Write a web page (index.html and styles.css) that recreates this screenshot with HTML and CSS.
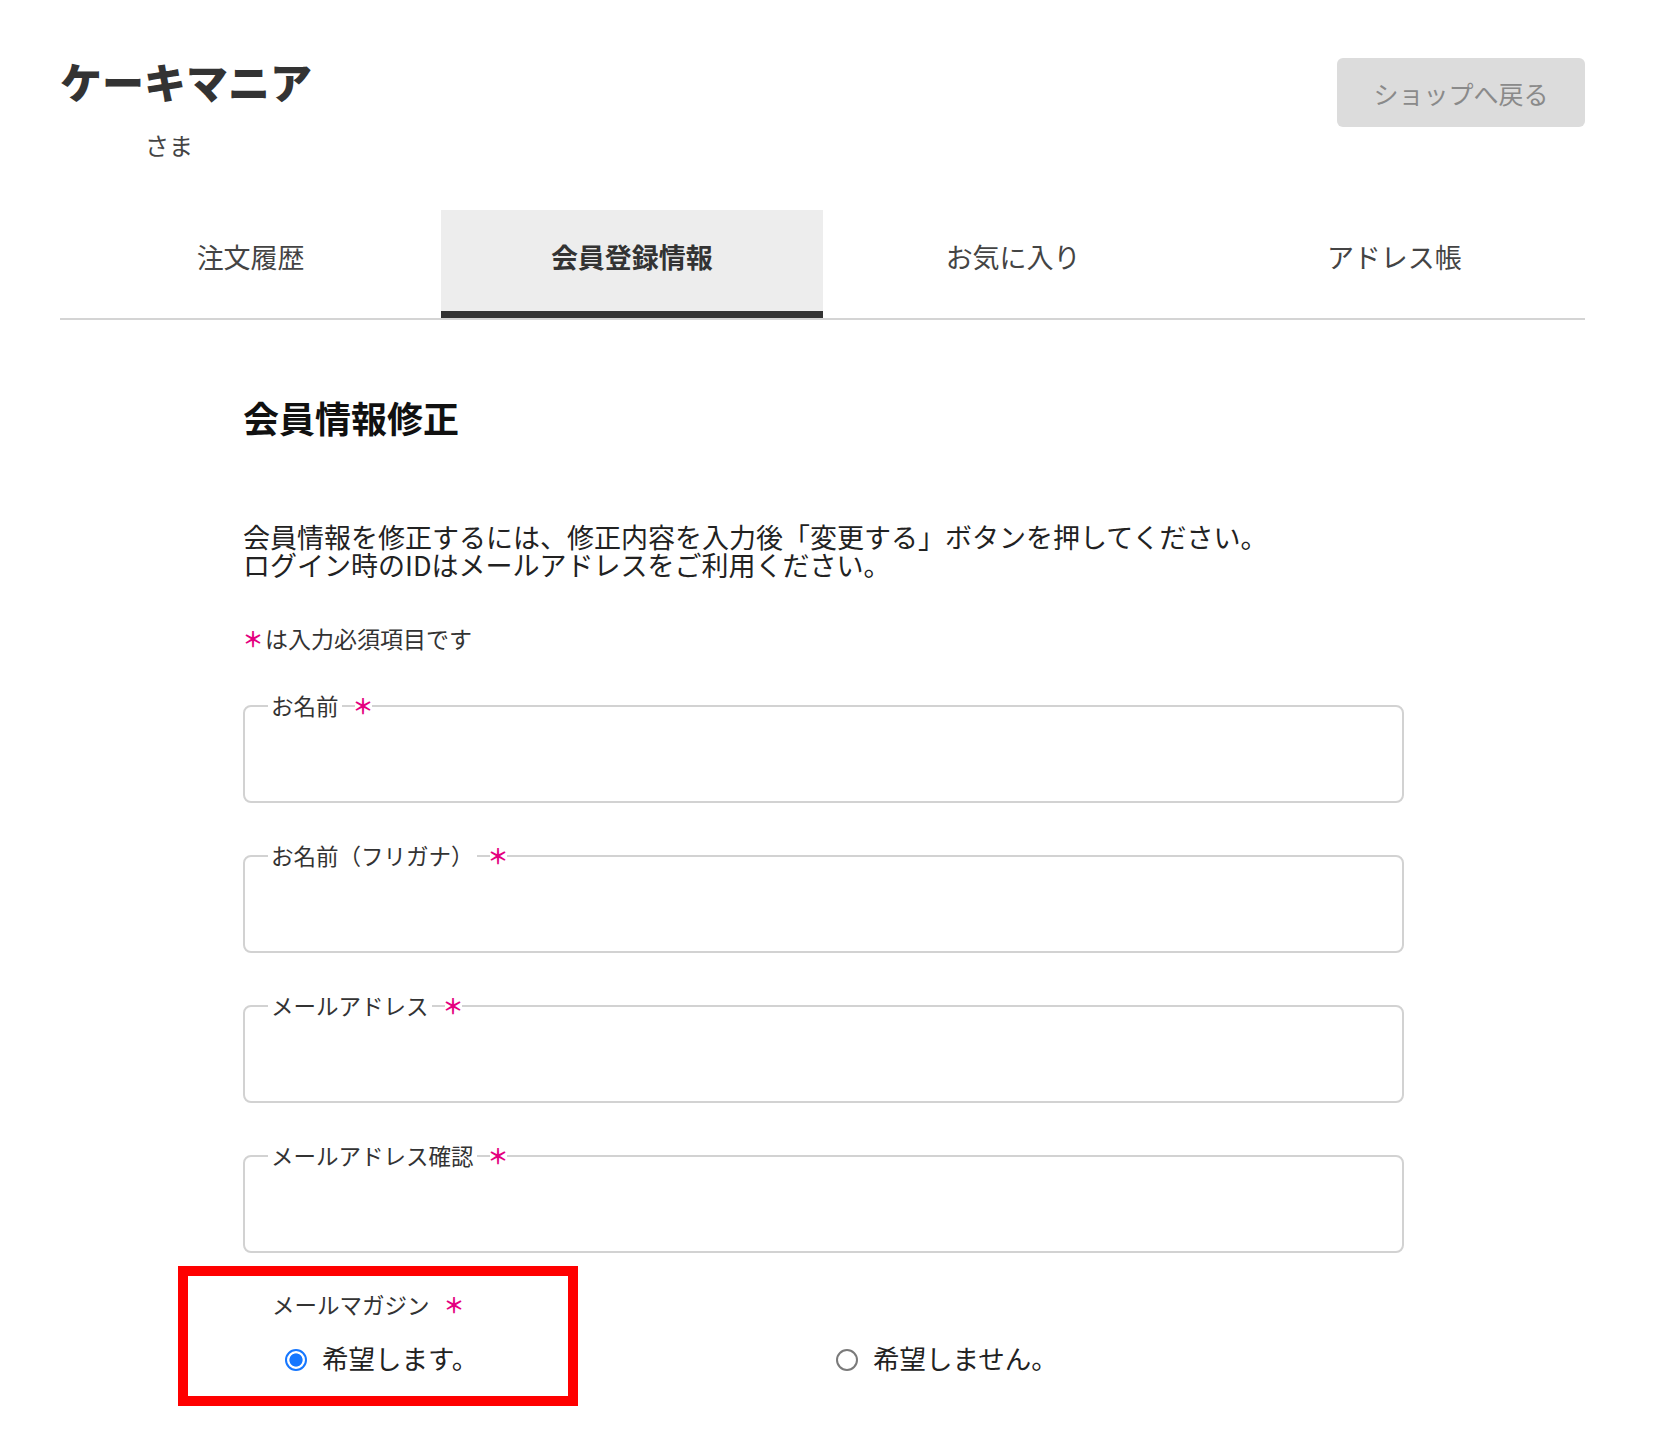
FILE: index.html
```html
<!doctype html>
<html lang="ja">
	<head>
		<meta charset="utf-8">
		<title>会員情報修正 | ケーキマニア</title>
		<link rel="stylesheet" href="styles.css">
	</head>
	<body>
		<div class="page">
			<header class="header">
				<div class="account">
					<h1 class="shop-name">ケーキマニア</h1>
					<p class="customer">さま</p>
				</div>
				<a class="back-btn" href="#">ショップへ戻る</a>
			</header>

			<nav class="tabs">
				<a class="tab" href="#">注文履歴</a>
				<a class="tab is-active" href="#">会員登録情報</a>
				<a class="tab" href="#">お気に入り</a>
				<a class="tab" href="#">アドレス帳</a>
			</nav>

			<main class="content">
				<h2 class="section-title">会員情報修正</h2>
				<p class="lead">会員情報を修正するには、修正内容を入力後「変更する」ボタンを押してください。<br>ログイン時のIDはメールアドレスをご利用ください。</p>
				<p class="req-note"><span class="req">＊</span>は入力必須項目です</p>

				<form class="member-form">
					<div class="field">
						<div class="field-label"><span class="field-text">お名前</span><span class="req">＊</span></div>
						<input class="field-input" type="text" name="name">
					</div>
					<div class="field">
						<div class="field-label"><span class="field-text">お名前（フリガナ）</span><span class="req">＊</span></div>
						<input class="field-input" type="text" name="kana">
					</div>
					<div class="field">
						<div class="field-label"><span class="field-text">メールアドレス</span><span class="req">＊</span></div>
						<input class="field-input" type="email" name="email">
					</div>
					<div class="field">
						<div class="field-label"><span class="field-text">メールアドレス確認</span><span class="req">＊</span></div>
						<input class="field-input" type="email" name="email_confirm">
					</div>

					<div class="magazine">
						<div class="magazine-label"><span class="field-text">メールマガジン</span><span class="req">＊</span></div>
						<div class="radios">
							<label class="radio"><input type="radio" name="magazine" checked>希望します。</label>
							<label class="radio"><input type="radio" name="magazine">希望しません。</label>
						</div>
						<div class="highlight"></div>
					</div>
				</form>
			</main>
		</div>
	</body>
</html>
```

FILE: styles.css
```css
body {
	margin: 0;
	background: #fff;
	color: #333;
	font-family: "Noto Sans CJK JP", "Noto Sans", sans-serif;
}

.page { width: 1525px; margin-left: 60px; }

/* header */
.header { display: flex; justify-content: space-between; align-items: flex-start; padding-top: 56px; }
.shop-name { margin: 0; font-size: 42px; line-height: 50px; font-weight: 900; color: #333; }
.customer { margin: 24px 0 0 85px; font-size: 24px; line-height: 30px; color: #444; }
.back-btn {
	margin-top: 2px;
	width: 248px;
	height: 69px;
	display: flex;
	align-items: center;
	justify-content: center;
	background: #dcdcdc;
	border-radius: 6px;
	color: #8a8a8a;
	font-size: 25px;
	text-decoration: none;
}

/* tabs */
.tabs {
	margin-top: 50px;
	display: grid;
	grid-template-columns: repeat(4, 1fr);
	border-bottom: 2px solid #d4d4d4;
}
.tab {
	height: 108px;
	box-sizing: border-box;
	padding-bottom: 15px;
	display: flex;
	align-items: center;
	justify-content: center;
	font-size: 27px;
	color: #444;
	text-decoration: none;
}
.tab.is-active {
	background: #ededed;
	box-shadow: inset 0 -7px 0 #333;
	font-weight: bold;
	color: #333;
}

/* content */
.content { margin-left: 183px; width: 1161px; }
.section-title { margin: 75px 0 0; font-size: 36px; line-height: 44px; font-weight: bold; color: #111; }
.lead { margin: 84px 0 0; font-size: 27px; line-height: 28px; color: #222; }
.req-note { margin: 45px 0 0; padding-left: 3px; font-size: 23px; line-height: 28px; color: #333; display: flex; }
.req-note .req { width: 14px; margin-right: 5px; }

.req {
	display: inline-flex;
	justify-content: center;
	width: 17px;
	color: #e4007f;
	background: #fff;
	font-size: 21px;
	font-weight: bold;
}

/* fields */
.member-form { margin-top: 53px; }
.field {
	position: relative;
	height: 98px;
	box-sizing: border-box;
	border: 2px solid #d2d2d2;
	border-radius: 8px;
}
.field + .field { margin-top: 52px; }
.field-input {
	width: 100%;
	height: 100%;
	box-sizing: border-box;
	border: 0;
	background: transparent;
	padding: 20px 26px 0;
	font: inherit;
	font-size: 24px;
	outline: none;
}
.field-label {
	position: absolute;
	top: -16px;
	left: 23px;
	display: flex;
	align-items: center;
	gap: 13px;
	font-size: 22.5px;
	line-height: 28px;
	color: #333;
}
.field-text { padding: 0 3px; background: #fff; }

/* mail magazine */
.magazine { position: relative; margin-top: 13px; padding: 24px 0 32px; }
.magazine-label {
	padding-left: 26px;
	display: flex;
	align-items: center;
	gap: 13px;
	font-size: 22.5px;
	line-height: 28px;
	color: #333;
}
.radios {
	margin-top: 24px;
	padding-left: 42px;
	display: grid;
	grid-template-columns: 551px auto;
}
.radio { display: flex; align-items: center; gap: 15px; font-size: 26.5px; line-height: 32px; color: #222; }
.radio input {
	appearance: none;
	-webkit-appearance: none;
	margin: 4px 0 0;
	width: 22px;
	height: 22px;
	box-sizing: border-box;
	border: 2px solid #7a7a7a;
	border-radius: 50%;
	background: #fff;
}
.radio input:checked {
	border: 2px solid #1677ff;
	background: radial-gradient(circle, #1677ff 0 6.2px, #fff 7px);
}

.highlight {
	position: absolute;
	top: 0;
	left: -65px;
	width: 400px;
	height: 100%;
	box-sizing: border-box;
	border: 10px solid #ff0000;
	pointer-events: none;
}
```
